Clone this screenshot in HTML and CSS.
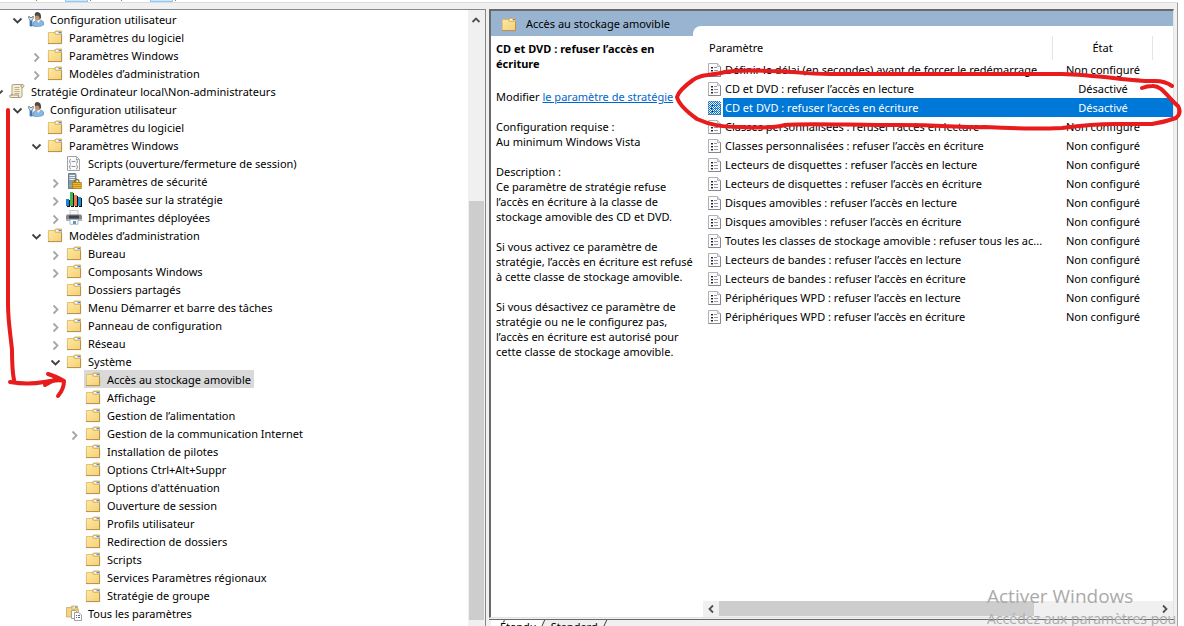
FILE: index.html
```html
<!DOCTYPE html>
<html lang="fr">
<head>
<meta charset="utf-8">
<title>Éditeur de stratégie de groupe locale</title>
<link rel="stylesheet" href="styles.css">
</head>
<body>
<svg class="defs" aria-hidden="true">
  <defs>
    <linearGradient id="gold" x1="0" y1="0" x2="1" y2="1"><stop offset="0" stop-color="#ffe9a4"/><stop offset="1" stop-color="#f3cf74"/></linearGradient>
    <pattern id="dither" width="2" height="2" patternUnits="userSpaceOnUse"><path d="M0 0h1v1H0zM1 1h1v1H1z" fill="#0078d7"/></pattern>
    <symbol id="folder" viewBox="0 0 16 16">
      <path d="M7 5V3.500L9 2H14.500V6H7z" fill="#e6c88a" stroke="#c9a25a" stroke-width=".8"/>
      <path d="M9 3h5v1.500H9z" fill="#fff"/><path d="M11.500 3H14v1.200h-2.500z" fill="#3f8fe0"/>
      <path d="M1 3.500H7L8.500 5.500H15V15H1z" fill="url(#gold)"/>
      <path d="M1.400 15V3.500H7L8.500 5.500H15" fill="none" stroke="#dcb560" stroke-width=".8"/>
      <path d="M1 14.600h13.600V5.500" fill="none" stroke="#b48d48" stroke-width="1"/>
    </symbol>
    <symbol id="user" viewBox="0 0 16 16">
      <path d="M4.500 15q0-5 4-6l2 1.500L13 9q3 1 3 4.500Q14 15.500 10 15.500q-4 0-5.500-.5z" fill="#86b8e3" stroke="#5688b8" stroke-width=".6"/>
      <path d="M8.500 9l2 3 2-3z" fill="#eef6fc"/>
      <ellipse cx="9.500" cy="6" rx="2.700" ry="3.500" fill="#c99168"/>
      <path d="M7 5Q6 1.500 9 1 13.500 .8 13 7l-1.500 2Q12 5 9.500 4.500 8 4.500 7 5z" fill="#4d4a45"/>
      <path d="M.800 5v2.500L2 9v6h2V9l1.200-1.500V5L4 6.500H2z" fill="#dce8f3" stroke="#536f8b" stroke-width=".8"/>
      <path d="M2 9.500h2V15H2z" fill="#3d78b4"/>
    </symbol>
    <symbol id="scroll" viewBox="0 0 16 16">
      <path d="M4 1.500h9q2 0 2 1.500t-2 1.500v8q0 2-2 2H2q-1.500 0-1.500-1.200T2 12h1V3q0-1.500 1-1.500z" fill="#f7edcf" stroke="#a39776" stroke-width=".9"/>
      <path d="M5.500 4.500h5M5.500 6.500h5M5.500 8.500h5M5.500 10.500h5" stroke="#a9a18b" stroke-width=".8"/>
      <path d="M2 12h7.500q-1 2 1 2.500M12.500 2q-1 1 0 2.500" fill="none" stroke="#8c8268" stroke-width=".8"/>
    </symbol>
    <symbol id="script" viewBox="0 0 16 16">
      <path d="M1.500 1.500h9l3 3v11h-12z" fill="#fafafa" stroke="#a0a3a6"/><path d="M10.500 1.500v3h3" fill="none" stroke="#b0b3b6"/>
      <path d="M5 4.500Q3.500 4.500 3.800 5.500T3 6.500q1 0 .8 1T5 8.500M10 4.500q1.500 0 1.200 1t.8 1q-1 0-.8 1T10 8.500M5 10Q3.500 10 3.800 11T3 12q1 0 .8 1T5 14M10 10q1.500 0 1.200 1t.8 1q-1 0-.8 1T10 14" fill="none" stroke="#777b80" stroke-width=".7"/>
      <path d="M5.500 6.500h4M5.500 11.500h4" stroke="#8895a8"/>
    </symbol>
    <symbol id="security" viewBox="0 0 16 16">
      <path d="M2.500.500H9q1 0 1 1v14H2.500z" fill="#8b9aa8" stroke="#596875" stroke-width=".8"/>
      <path d="M3.500 2.500h5.500M3.500 4.500h5.500M3.500 6.500h5.500" stroke="#e9f0f5"/><path d="M3.500 12h2v1h-2z" fill="#6de45c"/>
      <path d="M8.500 10V8.500q0-2 2.200-2t2.200 2V10" fill="none" stroke="#8b7434" stroke-width="1.300"/>
      <path d="M6.500 9.500h8.800v6H6.500z" fill="#edb727" stroke="#a57814" stroke-width=".8"/><path d="M7 11.500h7.800M7 13.500h7.800" stroke="#c8921c"/>
    </symbol>
    <symbol id="qos" viewBox="0 0 16 16">
      <path d="M1 9h3v7H1zM5 2h3v14H5zM9 5h3v11H9zM13 7h3v9h-3z" fill="#111"/>
      <path d="M0 8h3v7H0z" fill="#1683dd"/><path d="M4 1h3v14H4z" fill="#45b84c"/><path d="M8 4h3v11H8z" fill="#ee7953"/><path d="M12 6h3v9h-3z" fill="#168ed8"/>
    </symbol>
    <symbol id="printer" viewBox="0 0 16 16">
      <path d="M4 1.500h8V6H4z" fill="#f7f8fa" stroke="#b3b7bc" stroke-width=".7"/>
      <path d="M1 5.500h14l1 1.500v5H0V7z" fill="#83878b"/><path d="M3 6.500h10v3H3z" fill="#3c3f43"/><path d="M0 10h16v2H0z" fill="#b0b4b8"/>
      <path d="M4 10.500h8v4.800H4z" fill="#fff" stroke="#909fae" stroke-width=".7"/><path d="M7 12h3v3H7z" fill="#5b9ab9"/>
    </symbol>
    <symbol id="all" viewBox="0 0 16 16">
      <path d="M.5 2.500H5L6 4h6.500v8H.500z" fill="#f3d37e" stroke="#c9a14a" stroke-width=".7"/>
      <path d="M5.500 3.500V1h6v3" fill="#e6c88a" stroke="#c9a25a" stroke-width=".7"/><path d="M7.500 1.800h3.500v1H7.500z" fill="#fff"/><path d="M9 1.800h2v1H9z" fill="#3f8fe0"/>
      <path d="M5.500 5.500h4l2 2v6h-6z" fill="#fff" stroke="#a0a0a0"/><path d="M8.500 7.500h4l3 2.500v5.500h-7z" fill="#fff" stroke="#a0a0a0"/>
      <path d="M10 10.500h1M12 10.500h2M10 12.500h1M12 12.500h2" stroke="#54648a"/>
    </symbol>
    <symbol id="policy" viewBox="0 0 13 15">
      <path d="M.500 1.500h9l3 3v10H.500z" fill="#fcfcfc" stroke="#b0b2b4"/><path d="M.500 14.500h12v-10" fill="none" stroke="#85888b"/><path d="M9.500 1.500v3h3" fill="#e4e4e4" stroke="#b4b6b8"/>
      <path d="M3 5h2v1H3zM3 8h2v1H3zM3 11h2v1H3z" fill="#202228"/><path d="M3 6h2v1H3zM3 9h2v1H3zM3 12h2v1H3z" fill="#9a9ca2"/><path d="M6 5.500h3M6 8.500h4M6 11.500h4" stroke="#9294b0"/>
    </symbol>
    <symbol id="open" viewBox="0 0 16 16"><path d="M4.500 6.500l4 4 4-4" fill="none" stroke="#404040" stroke-width="1.800"/></symbol>
    <symbol id="closed" viewBox="0 0 16 16"><path d="M6.500 5.500l4 4-4 4" fill="none" stroke="#a6a6a6" stroke-width="1.800"/></symbol>
  </defs>
</svg>

<div class="window">
  <div class="toolbar"><i class="tick"></i><i class="hot"></i><i class="tick"></i><i class="tick"></i><i class="hot"></i><i class="tick"></i></div>
  <div class="panes">
    <nav class="tree-pane" aria-label="Arborescence">
      <ul class="tree root">
        <li><ul class="tree">
          <li><div class="row"><button class="exp" aria-label="Réduire"><svg><use href="#open"/></svg></button><span class="node"><svg><use href="#user"/></svg>Configuration utilisateur</span></div>
            <ul class="tree">
              <li><div class="row"><span class="exp"></span><span class="node"><svg><use href="#folder"/></svg>Paramètres du logiciel</span></div></li>
              <li><div class="row"><button class="exp" aria-label="Développer"><svg><use href="#closed"/></svg></button><span class="node"><svg><use href="#folder"/></svg>Paramètres Windows</span></div></li>
              <li><div class="row"><button class="exp" aria-label="Développer"><svg><use href="#closed"/></svg></button><span class="node"><svg><use href="#folder"/></svg>Modèles d’administration</span></div></li>
            </ul>
          </li>
        </ul></li>
        <li><div class="row"><button class="exp" aria-label="Réduire"><svg><use href="#open"/></svg></button><span class="node"><svg><use href="#scroll"/></svg>Stratégie Ordinateur local\Non-administrateurs</span></div>
          <ul class="tree">
            <li><div class="row"><button class="exp" aria-label="Réduire"><svg><use href="#open"/></svg></button><span class="node"><svg><use href="#user"/></svg>Configuration utilisateur</span></div>
              <ul class="tree">
                <li><div class="row"><span class="exp"></span><span class="node"><svg><use href="#folder"/></svg>Paramètres du logiciel</span></div></li>
                <li><div class="row"><button class="exp" aria-label="Réduire"><svg><use href="#open"/></svg></button><span class="node"><svg><use href="#folder"/></svg>Paramètres Windows</span></div>
                  <ul class="tree">
                    <li><div class="row"><span class="exp"></span><span class="node"><svg><use href="#script"/></svg>Scripts (ouverture/fermeture de session)</span></div></li>
                    <li><div class="row"><button class="exp" aria-label="Développer"><svg><use href="#closed"/></svg></button><span class="node"><svg><use href="#security"/></svg>Paramètres de sécurité</span></div></li>
                    <li><div class="row"><button class="exp" aria-label="Développer"><svg><use href="#closed"/></svg></button><span class="node"><svg><use href="#qos"/></svg>QoS basée sur la stratégie</span></div></li>
                    <li><div class="row"><button class="exp" aria-label="Développer"><svg><use href="#closed"/></svg></button><span class="node"><svg><use href="#printer"/></svg>Imprimantes déployées</span></div></li>
                  </ul>
                </li>
                <li><div class="row"><button class="exp" aria-label="Réduire"><svg><use href="#open"/></svg></button><span class="node"><svg><use href="#folder"/></svg>Modèles d’administration</span></div>
                  <ul class="tree">
                    <li><div class="row"><button class="exp" aria-label="Développer"><svg><use href="#closed"/></svg></button><span class="node"><svg><use href="#folder"/></svg>Bureau</span></div></li>
                    <li><div class="row"><button class="exp" aria-label="Développer"><svg><use href="#closed"/></svg></button><span class="node"><svg><use href="#folder"/></svg>Composants Windows</span></div></li>
                    <li><div class="row"><span class="exp"></span><span class="node"><svg><use href="#folder"/></svg>Dossiers partagés</span></div></li>
                    <li><div class="row"><button class="exp" aria-label="Développer"><svg><use href="#closed"/></svg></button><span class="node"><svg><use href="#folder"/></svg>Menu Démarrer et barre des tâches</span></div></li>
                    <li><div class="row"><button class="exp" aria-label="Développer"><svg><use href="#closed"/></svg></button><span class="node"><svg><use href="#folder"/></svg>Panneau de configuration</span></div></li>
                    <li><div class="row"><button class="exp" aria-label="Développer"><svg><use href="#closed"/></svg></button><span class="node"><svg><use href="#folder"/></svg>Réseau</span></div></li>
                    <li><div class="row"><button class="exp" aria-label="Réduire"><svg><use href="#open"/></svg></button><span class="node"><svg><use href="#folder"/></svg>Système</span></div>
                      <ul class="tree">
                        <li><div class="row"><span class="exp"></span><span class="node selected"><svg><use href="#folder"/></svg>Accès au stockage amovible</span></div></li>
                        <li><div class="row"><span class="exp"></span><span class="node"><svg><use href="#folder"/></svg>Affichage</span></div></li>
                        <li><div class="row"><span class="exp"></span><span class="node"><svg><use href="#folder"/></svg>Gestion de l’alimentation</span></div></li>
                        <li><div class="row"><button class="exp" aria-label="Développer"><svg><use href="#closed"/></svg></button><span class="node"><svg><use href="#folder"/></svg>Gestion de la communication Internet</span></div></li>
                        <li><div class="row"><span class="exp"></span><span class="node"><svg><use href="#folder"/></svg>Installation de pilotes</span></div></li>
                        <li><div class="row"><span class="exp"></span><span class="node"><svg><use href="#folder"/></svg>Options Ctrl+Alt+Suppr</span></div></li>
                        <li><div class="row"><span class="exp"></span><span class="node"><svg><use href="#folder"/></svg>Options d'atténuation</span></div></li>
                        <li><div class="row"><span class="exp"></span><span class="node"><svg><use href="#folder"/></svg>Ouverture de session</span></div></li>
                        <li><div class="row"><span class="exp"></span><span class="node"><svg><use href="#folder"/></svg>Profils utilisateur</span></div></li>
                        <li><div class="row"><span class="exp"></span><span class="node"><svg><use href="#folder"/></svg>Redirection de dossiers</span></div></li>
                        <li><div class="row"><span class="exp"></span><span class="node"><svg><use href="#folder"/></svg>Scripts</span></div></li>
                        <li><div class="row"><span class="exp"></span><span class="node"><svg><use href="#folder"/></svg>Services Paramètres régionaux</span></div></li>
                        <li><div class="row"><span class="exp"></span><span class="node"><svg><use href="#folder"/></svg>Stratégie de groupe</span></div></li>
                      </ul>
                    </li>
                    <li><div class="row"><span class="exp"></span><span class="node"><svg><use href="#all"/></svg>Tous les paramètres</span></div></li>
                  </ul>
                </li>
              </ul>
            </li>
          </ul>
        </li>
      </ul>
      <div class="vbar">
        <button class="arrow" aria-label="Défiler vers le haut"><svg viewBox="0 0 16 16"><path d="M4.500 10L8 6.500l3.500 3.500" fill="none" stroke="#505050" stroke-width="1.800"/></svg></button>
        <div class="track"><div class="vthumb"></div></div>
      </div>
    </nav>

    <main class="detail">
      <div class="view">
        <header class="title"><svg><use href="#folder"/></svg>Accès au stockage amovible</header>
        <div class="content">
          <section class="desc">
            <h1>CD et DVD : refuser l’accès en<br>écriture</h1>
            <p>Modifier <a href="#edit">le paramètre de stratégie</a></p>
            <p>Configuration requise :<br>Au minimum Windows Vista</p>
            <p>Description :<br>Ce paramètre de stratégie refuse<br>l’accès en écriture à la classe de<br>stockage amovible des CD et DVD.</p>
            <p>Si vous activez ce paramètre de<br>stratégie, l’accès en écriture est refusé<br>à cette classe de stockage amovible.</p>
            <p>Si vous désactivez ce paramètre de<br>stratégie ou ne le configurez pas,<br>l’accès en écriture est autorisé pour<br>cette classe de stockage amovible.</p>
          </section>
          <section class="list">
            <table>
              <colgroup><col><col class="c-state"><col class="c-rest"></colgroup>
              <thead><tr><th scope="col"><div>Paramètre</div></th><th scope="col"><div>État</div></th><td></td></tr></thead>
              <tbody>
                <tr><td><div class="cell"><svg><use href="#policy"/></svg><span>Définir le délai (en secondes) avant de forcer le redémarrage</span></div></td><td>Non configuré</td><td></td></tr>
                <tr><td><div class="cell"><svg><use href="#policy"/></svg><span>CD et DVD : refuser l’accès en lecture</span></div></td><td>Désactivé</td><td></td></tr>
                <tr class="on"><td><div class="cell"><svg><use href="#policy"/><rect y="1" width="13" height="14" fill="url(#dither)"/></svg><span>CD et DVD : refuser l’accès en écriture</span></div></td><td>Désactivé</td><td></td></tr>
                <tr><td><div class="cell"><svg><use href="#policy"/></svg><span>Classes personnalisées : refuser l’accès en lecture</span></div></td><td>Non configuré</td><td></td></tr>
                <tr><td><div class="cell"><svg><use href="#policy"/></svg><span>Classes personnalisées : refuser l’accès en écriture</span></div></td><td>Non configuré</td><td></td></tr>
                <tr><td><div class="cell"><svg><use href="#policy"/></svg><span>Lecteurs de disquettes : refuser l’accès en lecture</span></div></td><td>Non configuré</td><td></td></tr>
                <tr><td><div class="cell"><svg><use href="#policy"/></svg><span>Lecteurs de disquettes : refuser l’accès en écriture</span></div></td><td>Non configuré</td><td></td></tr>
                <tr><td><div class="cell"><svg><use href="#policy"/></svg><span>Disques amovibles : refuser l’accès en lecture</span></div></td><td>Non configuré</td><td></td></tr>
                <tr><td><div class="cell"><svg><use href="#policy"/></svg><span>Disques amovibles : refuser l’accès en écriture</span></div></td><td>Non configuré</td><td></td></tr>
                <tr><td><div class="cell"><svg><use href="#policy"/></svg><span>Toutes les classes de stockage amovible : refuser tous les ac...</span></div></td><td>Non configuré</td><td></td></tr>
                <tr><td><div class="cell"><svg><use href="#policy"/></svg><span>Lecteurs de bandes : refuser l’accès en lecture</span></div></td><td>Non configuré</td><td></td></tr>
                <tr><td><div class="cell"><svg><use href="#policy"/></svg><span>Lecteurs de bandes : refuser l’accès en écriture</span></div></td><td>Non configuré</td><td></td></tr>
                <tr><td><div class="cell"><svg><use href="#policy"/></svg><span>Périphériques WPD : refuser l’accès en lecture</span></div></td><td>Non configuré</td><td></td></tr>
                <tr><td><div class="cell"><svg><use href="#policy"/></svg><span>Périphériques WPD : refuser l’accès en écriture</span></div></td><td>Non configuré</td><td></td></tr>
              </tbody>
            </table>
            <div class="hbar">
              <button class="arrow" aria-label="Défiler à gauche"><svg viewBox="0 0 16 16"><path d="M10 4.500L6.500 8l3.500 3.500" fill="none" stroke="#505050" stroke-width="1.800"/></svg></button>
              <div class="track"><div class="hthumb"></div></div>
              <button class="arrow" aria-label="Défiler à droite"><svg viewBox="0 0 16 16"><path d="M6 4.500L9.500 8 6 11.500" fill="none" stroke="#505050" stroke-width="1.800"/></svg></button>
            </div>
          </section>
        </div>
      </div>
      <div class="tabs"><button class="tab active">Étendu</button><button class="tab">Standard</button></div>
    </main>
  </div>

  <div class="watermark"><div class="big">Activer Windows</div><div class="small">Accédez aux paramètres pour activer Windows.</div></div>
  <svg class="ink" viewBox="0 0 1184 626" aria-hidden="true">
    <g fill="none" stroke="#e81c1c" stroke-linecap="round" stroke-linejoin="round">
      <path stroke-width="4" d="M8 110V304C8 322 11 338 12 350Q12 370 14 380"/>
      <path stroke-width="4" d="M10 382Q28 385 44 382T64 381M48 374Q55 376 64 381Q64 389 58 396"/>
      <path stroke-width="4" d="M45 385L56 379"/>
      <path stroke-width="4" d="M1172 86Q1165 81 1155 81C1135 82 1100 75 1062 74H830C805 74 790 71 770 71C750 70 735 70 725 72C710 76 700 74 693 80Q679 90 677 97C679 105 690 114 697 119C712 126 725 127 740 127C760 128 775 128 785 125C800 123 850 125 900 125S950 128 985 127C1020 129 1040 129 1062 128C1085 125 1100 124 1115 124H1152Q1165 122 1176 118Q1182 113 1178 106C1168 98 1162 85 1152 86Q1147 86 1142 88"/>
    </g>
  </svg>
</div>
</body>
</html>
```

FILE: styles.css
```css
* { box-sizing: border-box; }
body { margin: 0; background: #fff; color: #000; font: 11px/15px "Noto Sans", "Open Sans", sans-serif; }
button { border: 0; padding: 0; background: none; font: inherit; color: inherit; }
.defs { position: absolute; width: 0; height: 0; }

.window { position: relative; height: 100vh; overflow: hidden; padding-right: 6px; display: flex; flex-direction: column; }
.toolbar { height: 3px; flex: none; display: flex; align-items: flex-start; border-bottom: 1px solid #dcdcdc; padding-left: 36px; }
.tick { width: 1px; height: 1px; background: #888; margin-right: 28px; }
.hot { width: 23px; height: 2px; background: #cce8ff; border: 1px solid #90c8f6; border-top: 0; margin-right: 2px; }
.hot + .tick { margin-right: 30px; }

.panes { flex: 1; min-height: 0; display: flex; gap: 3px; padding-top: 6px; background: #f0f0f0; border-right: 1px solid #a0a0a0; }

/* Tree */
.tree-pane { flex: none; width: 486px; display: flex; background: #fff; border-top: 1px solid #828790; border-right: 1px solid #828790; overflow: hidden; }
.tree { list-style: none; margin: 0; padding: 0 0 0 19px; }
.tree.root { flex: 1; min-width: 0; padding: 0; margin-left: -10px; }
.row { display: flex; height: 18px; align-items: center; white-space: nowrap; }
.exp { flex: none; width: 18px; height: 18px; padding-top: 1px; }
.exp svg { display: block; width: 16px; height: 16px; }
.node { display: flex; align-items: center; height: 18px; padding: 0 3px 0 1px; }
.node svg { width: 16px; height: 16px; margin-right: 6px; flex: none; }
.node.selected { background: #d9d9d9; }
.vbar { flex: none; width: 17px; display: flex; flex-direction: column; background: #f0f0f0; padding: 0 1px; }
.arrow { flex: none; width: 16px; height: 16px; }
.arrow svg { display: block; width: 16px; height: 16px; }
.vbar .arrow { height: 18px; padding-top: 2px; margin-left: -1px; }
.track { flex: 1; background: #f0f0f0; }
.vthumb { height: 70%; margin-top: 173px; background: #cdcdcd; }

/* Detail */
.detail { flex: 1; min-width: 0; display: flex; flex-direction: column; padding-right: 3px; }
.view { flex: 1; min-height: 0; display: flex; flex-direction: column; background: #fff; border: 2px solid #696969; border-right: 1px solid #e3e3e3; border-bottom: 1px solid #e3e3e3; }
.title { flex: none; height: 25px; background: #99b4d1; display: flex; align-items: center; gap: 9px; padding-left: 10px; }
.title svg { width: 16px; height: 16px; }
.content { flex: 1; min-height: 0; display: flex; }
.desc { flex: none; width: 202px; padding: 5px 0 0 5px; white-space: nowrap; }
.desc h1 { font-size: 11px; font-weight: 700; line-height: 15px; margin: 0 0 18px; }
.desc p { margin: 0 0 15px; }
.desc a { color: #0066cc; }
.list { flex: 1; min-width: 0; margin-top: -10px; background: #fff; border-top-left-radius: 8px; display: flex; flex-direction: column; justify-content: space-between; }
table { margin-left: 15px; width: calc(100% - 15px); table-layout: fixed; border-collapse: collapse; }
.c-state { width: 100px; }
.c-rest { width: 20px; }
th, td { padding: 0; text-align: center; font-weight: 400; white-space: nowrap; height: 19px; line-height: 19px; }
thead tr { height: 34px; vertical-align: bottom; }
th div { height: 24px; line-height: 24px; border-right: 1px solid #e5e5e5; }
th:first-child div { text-align: left; padding-left: 1px; }
.cell { display: flex; height: 19px; align-items: center; text-align: left; }
.cell svg { flex: none; width: 13px; height: 15px; margin-right: 2px; }
.cell span { flex: 1; padding-left: 2px; }
.on { color: #fff; }
.on td + td, .on span { background: #0078d7; }
.hbar { display: flex; height: 16px; margin-left: 10px; background: #f0f0f0; }
.hthumb { height: 15px; width: 72%; background: #cdcdcd; }

.tabs { flex: none; height: 7px; margin-top: 1px; padding-left: 2px; display: flex; overflow: hidden; border-top: 1px solid #696969; line-height: 14px; }
.tab { position: relative; height: 14px; padding: 0 6px 0 9px; }
.tab:first-child { padding-right: 5px; }
.tab::after { content: ""; position: absolute; right: 0; top: 0; height: 14px; border-right: 1px solid #404040; transform: skewX(-25deg); }
.tab.active { background: #fff; }

/* Overlays */
.watermark { position: absolute; right: 6px; bottom: -4px; width: 191px; overflow: hidden; white-space: nowrap; color: #aaa; font-family: "Open Sans", sans-serif; }
.big { font-size: 19px; line-height: 24px; }
.small { font-size: 14px; line-height: 22px; }
.ink { position: absolute; left: 0; top: 0; width: 1184px; height: 626px; pointer-events: none; }
```
